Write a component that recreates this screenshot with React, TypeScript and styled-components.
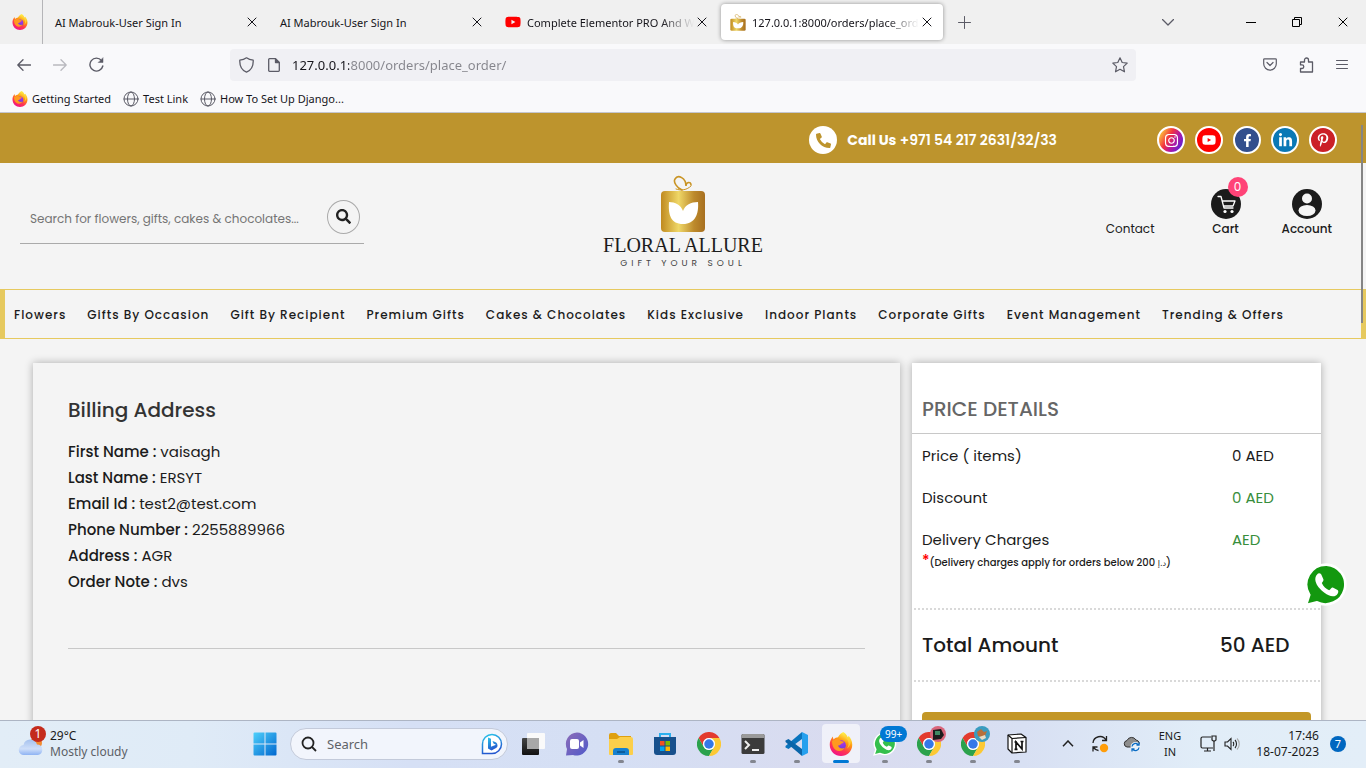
import React from 'react';
import styled, { createGlobalStyle } from 'styled-components';
import { FaInstagram, FaYoutube, FaFacebookF, FaLinkedinIn, FaPinterestP, FaPhoneAlt, FaSearch } from 'react-icons/fa';

const siteFont = 'Poppins, Inter, sans-serif';
const systemFont = '"Segoe UI", "Noto Sans", "Open Sans", sans-serif';

const GlobalStyle = createGlobalStyle`
  *, *::before, *::after { box-sizing: border-box; }
  body { margin: 0; font-family: ${siteFont}; color: #1b1b1b; background: #f4f4f4; }
  button { border: 0; padding: 0; background: none; font: inherit; color: inherit; }
  a { color: inherit; text-decoration: none; }
  svg { display: block; flex: none; }
`;

const Screen = styled.div`
  height: 100vh;
  display: flex;
  flex-direction: column;
  overflow: hidden;
`;

/* ---------- Browser chrome ---------- */

const Browser = styled.header`
  flex: none;
  font-family: ${systemFont};
  font-size: 11px;
  color: #15141a;
  background: #f9f9fb;
  border-bottom: 1px solid #c4c6ce;
`;

const TabStrip = styled.div`
  display: flex;
  align-items: center;
  height: 44px;
  background: #f0f0f0;
`;

const PinnedTab = styled.button`
  width: 43px;
  height: 44px;
  padding-left: 12px;
  border-right: 1px solid #b5b5b8;
  margin-right: 3px;
`;

const Tab = styled.div<{ $active?: boolean }>`
  display: flex;
  align-items: center;
  width: 222px;
  height: 36px;
  margin-right: 3px;
  padding: 0 8px 0 9px;
  border-radius: 4px;
  background: ${p => (p.$active ? '#fff' : 'transparent')};
  box-shadow: ${p => (p.$active ? '0 0 4px rgba(0, 0, 0, 0.4)' : 'none')};
`;

const TabTitle = styled.span<{ $fade?: boolean }>`
  flex: 1;
  min-width: 0;
  white-space: nowrap;
  mask-image: ${p => (p.$fade ? 'linear-gradient(90deg, #000 80%, transparent)' : 'none')};
  svg + & { margin-left: 6px; }
`;

const IconButton = styled.button<{ $w?: number }>`
  display: flex;
  align-items: center;
  justify-content: center;
  width: ${p => p.$w ?? 16}px;
  height: 32px;
  color: #5b5b66;
`;

const Spacer = styled.div`
  flex: 1;
`;

const WindowControls = styled.div`
  display: flex;
  margin-left: 37px;
`;

const Toolbar = styled.div`
  display: flex;
  align-items: center;
  height: 41px;
  padding: 0 6px;
`;

const UrlBar = styled.div`
  display: flex;
  align-items: center;
  flex: 1;
  height: 32px;
  margin: 0 116px;
  padding: 0 2px;
  border-radius: 4px;
  background: #f0f0f4;
`;

const UrlInput = styled.input`
  flex: 1;
  min-width: 0;
  height: 28px;
  margin-left: 4px;
  padding: 0;
  border: 0;
  outline: 0;
  font-family: ${systemFont};
  font-size: 13px;
  color: transparent;
  background: linear-gradient(90deg, #15141a 57px, #85858c 57px);
  background-clip: text;
`;

const Bookmarks = styled.nav`
  display: flex;
  gap: 12px;
  height: 27px;
  padding: 0 12px;
`;

const Bookmark = styled.a`
  display: flex;
  align-items: center;
  gap: 4px;
`;

/* ---------- Shop page ---------- */

const Viewport = styled.div`
  position: relative;
  flex: 1;
  min-height: 0;
  overflow: hidden;
  background: #f4f4f4;
`;

const ScrollThumb = styled.div`
  position: absolute;
  top: 12px;
  right: 3px;
  width: 2px;
  height: 198px;
  background: #858585;
`;

const TopBar = styled.div`
  display: flex;
  align-items: center;
  justify-content: flex-end;
  gap: 100px;
  height: 50px;
  padding: 4px 29px 0 0;
  background: #bd942d;
`;

const CallLink = styled.a`
  display: flex;
  align-items: center;
  gap: 10px;
  font-size: 14px;
  font-weight: 600;
  color: #fff;
  strong { font-weight: 700; }
`;

const Round = styled.span`
  display: grid;
  place-items: center;
  width: 28px;
  height: 28px;
  border-radius: 50%;
  color: #bd942d;
  background: #fff;
`;

const Socials = styled.div`
  display: flex;
  gap: 10px;
`;

const SocialLink = styled.a<{ $bg: string }>`
  display: grid;
  place-items: center;
  width: 28px;
  height: 28px;
  border: 2px solid #fff;
  border-radius: 50%;
  color: #fff;
  background: ${p => p.$bg};
`;

const ShopHeader = styled.div`
  display: grid;
  grid-template-columns: 1fr auto 1fr;
  height: 126px;
  padding: 0 34px 0 20px;
`;

const SearchForm = styled.form`
  display: flex;
  align-items: center;
  align-self: start;
  width: 344px;
  height: 54px;
  margin-top: 27px;
  padding: 0 4px 0 10px;
  border-bottom: 1px solid #aaa;
`;

const SearchInput = styled.input`
  flex: 1;
  min-width: 0;
  padding: 4px 0 0;
  border: 0;
  outline: 0;
  background: none;
  font-family: ${siteFont};
  font-size: 12px;
  &::placeholder { color: #757575; }
`;

const SearchButton = styled.button`
  display: grid;
  place-items: center;
  width: 33px;
  height: 34px;
  border: 1px solid #aaa;
  border-radius: 50%;
  color: #222;
`;

const Logo = styled.a`
  display: flex;
  flex-direction: column;
  align-items: center;
  margin-left: 14px;
  padding-top: 12px;
  color: #1d1d1d;
`;

const LogoName = styled.span`
  font-family: "Liberation Serif", serif;
  font-size: 20px;
  line-height: 24px;
  white-space: nowrap;
`;

const LogoTag = styled.span`
  font-size: 9px;
  line-height: 12px;
  letter-spacing: 4px;
  color: #444;
`;

const Actions = styled.nav`
  display: flex;
  justify-content: flex-end;
  gap: 41px;
  padding-top: 27px;
  font-size: 12px;
  font-weight: 500;
  line-height: 18px;
`;

const Action = styled.a`
  position: relative;
  display: flex;
  flex-direction: column;
  align-items: center;
  justify-content: flex-end;
  gap: 1px;
  height: 48px;
`;

const ContactLink = styled(Action)`
  margin-right: 15px;
  font-weight: 400;
`;

const CartBadge = styled.span`
  position: absolute;
  top: -13px;
  right: -7px;
  width: 20px;
  height: 20px;
  border-radius: 50%;
  font-size: 12px;
  font-weight: 400;
  line-height: 20px;
  text-align: center;
  color: #fff;
  background: #ff4377;
`;

const CategoryNav = styled.nav`
  display: flex;
  align-items: center;
  gap: 21px;
  height: 50px;
  padding: 2px 9px 0;
  border: solid #e6c95f;
  border-width: 1px 5px;
  font-size: 12px;
  font-weight: 500;
  letter-spacing: 1px;
  white-space: nowrap;
`;

const Columns = styled.main`
  display: grid;
  grid-template-columns: 867fr 409fr;
  gap: 12px;
  padding: 24px 45px 0 33px;
`;

const Card = styled.section`
  min-height: 460px;
  box-shadow: 0 0 8px rgba(0, 0, 0, 0.3);
`;

const BillingCard = styled(Card)`
  padding: 32px 35px 0;
  background: #f4f4f4;
`;

const BillingTitle = styled.h2`
  margin: 0 0 14px;
  font-size: 20px;
  font-weight: 500;
  line-height: 30px;
  color: #333;
`;

const BillingList = styled.dl`
  margin: 0;
  padding-bottom: 53px;
  border-bottom: 1px solid #c8c8c8;
  font-size: 15px;
  line-height: 26px;
`;

const BillingRow = styled.div`
  display: flex;
  gap: 4px;
  dt { font-weight: 500; }
  dd { margin: 0; }
`;

const PriceCard = styled(Card)`
  background: #fff;
`;

const PriceTitle = styled.h2`
  margin: 0;
  padding: 34px 10px 12px;
  border-bottom: 1px solid #c8c8c8;
  font-size: 20px;
  font-weight: 500;
  line-height: 24px;
  color: #666;
`;

const PriceList = styled.dl`
  display: grid;
  gap: 18px;
  margin: 0;
  padding: 10px 10px 0;
  font-size: 15px;
  line-height: 24px;
`;

const PriceRow = styled.div<{ $green?: boolean }>`
  display: grid;
  grid-template-columns: 1fr 79px;
  dd { margin: 0; color: ${p => (p.$green ? '#388e3c' : 'inherit')}; }
`;

const Note = styled.p`
  margin: 0 10px 35px;
  padding-top: 1px;
  font-size: 10px;
  font-weight: 500;
  line-height: 18px;
`;

const Star = styled.span`
  font-size: 15px;
  line-height: 1;
  color: #f00;
`;

const Currency = styled.span`
  font-family: "DejaVu Sans", sans-serif;
  font-size: 8px;
  font-weight: 400;
`;

const Total = styled.div`
  display: grid;
  grid-template-columns: 1fr 91px;
  margin: 0 1px 30px 2px;
  padding: 0 9px 0 8px;
  border: dotted #d9d9d9;
  border-width: 2px 0;
  font-size: 20px;
  font-weight: 500;
  line-height: 70px;
`;

const OrderButton = styled.button`
  display: block;
  width: calc(100% - 20px);
  height: 44px;
  margin: 0 10px;
  border-radius: 4px;
  background: #c39727;
`;

const ChatLink = styled.a`
  position: absolute;
  right: 18px;
  bottom: 113px;
`;

/* ---------- Taskbar ---------- */

const Taskbar = styled.footer`
  display: flex;
  align-items: center;
  flex: none;
  height: 48px;
  padding-bottom: 2px;
  border-top: 1px solid #adb5c4;
  font-family: ${systemFont};
  font-size: 12px;
  line-height: 16px;
  background: linear-gradient(90deg, #e2edf7 0%, #dfebf7 14%, #d6e0f5 30%, #d5dff4 45%, #d9dbef 62%, #d8e0f3 75%, #e1edf8 88%, #e3eef8 100%);
`;

const Weather = styled.button`
  position: relative;
  display: flex;
  align-items: center;
  gap: 6px;
  width: 243px;
  padding-left: 18px;
  text-align: left;
`;

const Muted = styled.div`
  color: #5c6066;
`;

const AlertBadge = styled.span`
  position: absolute;
  top: -2px;
  left: 30px;
  width: 16px;
  height: 16px;
  border-radius: 50%;
  text-align: center;
  color: #fff;
  background: #c42b1c;
`;

const TaskButton = styled.button<{ $state?: 'active' | 'running' }>`
  position: relative;
  display: grid;
  place-items: center;
  width: 38px;
  height: 39px;
  margin: 0 3px;
  border-radius: 4px;
  background: ${p => (p.$state === 'active' ? 'rgba(255, 255, 255, 0.6)' : 'transparent')};
  &::after {
    content: '';
    position: absolute;
    display: ${p => (p.$state ? 'block' : 'none')};
    bottom: 0;
    width: ${p => (p.$state === 'active' ? 16 : 6)}px;
    height: 3px;
    border-radius: 2px;
    background: ${p => (p.$state === 'active' ? '#0078d4' : '#83868f')};
  }
`;

const UnreadBadge = styled.span`
  position: absolute;
  top: 2px;
  left: 14px;
  padding: 0 5px;
  border-radius: 8px;
  font-size: 10px;
  line-height: 16px;
  color: #fff;
  background: #0078d4;
`;

const Avatar = styled.svg`
  position: absolute;
  top: 2px;
  right: 2px;
`;

const TaskSearch = styled.label`
  display: flex;
  align-items: center;
  gap: 10px;
  width: 218px;
  height: 32px;
  margin: 0 3px;
  padding: 0 4px 0 10px;
  border: 1px solid #c3cada;
  border-radius: 16px;
  background: #f2f5fc;
  input {
    flex: 1;
    min-width: 0;
    padding: 0;
    border: 0;
    outline: 0;
    background: none;
    font-family: ${systemFont};
    font-size: 13px;
  }
  input::placeholder { color: #5f6368; }
`;

const Tray = styled.div`
  display: flex;
  align-items: center;
  padding-right: 20px;
  text-align: center;
`;

const Language = styled.button`
  width: 44px;
  font-size: 11px;
`;

const Clock = styled.time`
  width: 79px;
  margin-right: 11px;
  text-align: right;
`;

const NoticeBadge = styled.span`
  width: 16px;
  height: 16px;
  border-radius: 50%;
  font-size: 11px;
  color: #fff;
  background: #0067c0;
`;

/* ---------- Drawings ---------- */

const stroke = { fill: 'none', stroke: 'currentColor', strokeLinecap: 'round', strokeLinejoin: 'round' } as const;

const FirefoxIcon = ({ size, id }: { size: number; id: string }) => (
  <svg width={size} height={size} viewBox="0 0 32 32">
    <defs>
      <linearGradient id={`${id}a`} x1="0.8" y1="0" x2="0.3" y2="1">
        <stop offset="0.1" stopColor="#fff44f" />
        <stop offset="0.4" stopColor="#ff980e" />
        <stop offset="0.7" stopColor="#ff3750" />
        <stop offset="1" stopColor="#f0108a" />
      </linearGradient>
      <radialGradient id={`${id}b`} cx="0.6" cy="0.2" r="0.9">
        <stop offset="0" stopColor="#b833e1" />
        <stop offset="1" stopColor="#5b3fe0" />
      </radialGradient>
    </defs>
    <path fill={`url(#${id}a)`} d="M19 0c4 2 5 5 6 8l1-3c3 3 5 7 5 12 0 9-7 15-15 15S1 26 1 17c0-4 1-7 4-11l1 4c2-2 4-3 6-3 2-4 5-6 7-7z" />
    <circle cx="16" cy="17.500" r="6.500" fill={`url(#${id}b)`} />
    <path fill="#ff9a1f" d="M4 12c4-3 9-3 12 0l4 1c-1 2-3 2-4 3-1 2-3 2-4 2 1 4 6 5 9 3-2 4-8 6-12 3-4-3-5-7-5-12z" />
    <path fill="#ffd43a" opacity=".8" d="M19 1c3 3 3 7 6 10 2 4 1 8-1 11 5-3 6-10 3-14-2-1-3-2-4-4-1-1-2-2-4-3z" />
  </svg>
);

const GlobeIcon = () => (
  <svg width="16" height="16" viewBox="0 0 16 16" {...stroke} stroke="#5b5b66">
    <circle cx="8" cy="8" r="7" />
    <ellipse cx="8" cy="8" rx="3.5" ry="7" />
    <path d="M1 8h14" />
  </svg>
);

const CloseIcon = ({ color = '#15141a' }: { color?: string }) => (
  <svg width="10" height="10" viewBox="0 0 10 10" {...stroke} stroke={color}>
    <path d="M1 1l8 8M9 1L1 9" />
  </svg>
);

const GiftMark = ({ width, height, id }: { width: number; height: number; id: string }) => (
  <svg width={width} height={height} viewBox="0 0 46 58" preserveAspectRatio="none">
    <defs>
      <linearGradient id={id}>
        <stop offset="0" stopColor="#c08a1f" />
        <stop offset="0.4" stopColor="#efd767" />
        <stop offset="0.75" stopColor="#bd8a2c" />
        <stop offset="1" stopColor="#a76f20" />
      </linearGradient>
    </defs>
    <rect x="1" y="16" width="44" height="41" rx="4" fill={`url(#${id})`} />
    <path fill="#fff" d="M9 27c6 0 12 3 14 9 2-6 8-9 15-9 1 12-3 22-15 22S8 40 9 27z" />
    <g fill="none" stroke="#c99424" strokeWidth="1.600" strokeLinecap="round">
      <path d="M22 15c-5-2-9-8-7-11 3-5 11-1 11 7 0-4 5-5 5-1" />
      <path d="M16 14c5 2 11 1 15-3" strokeWidth="1" />
    </g>
  </svg>
);

const ChromeIcon = () => (
  <svg width="24" height="24" viewBox="0 0 48 48">
    <path fill="#e33b2e" d="M24 12h20.800A24 24 0 0 0 3.200 12L13.600 30A12 12 0 0 1 24 12z" />
    <path fill="#2ba24c" d="M13.600 30L3.200 12A24 24 0 0 0 24 48l10.400-18A12 12 0 0 1 13.600 30z" />
    <path fill="#fcc934" d="M34.400 30L24 48A24 24 0 0 0 44.800 12H24a12 12 0 0 1 10.400 18z" />
    <circle cx="24" cy="24" r="12" fill="#fff" />
    <circle cx="24" cy="24" r="9.500" fill="#3478e8" />
  </svg>
);

const CartIcon = () => (
  <svg width="30" height="30" viewBox="0 0 30 30">
    <circle cx="15" cy="15" r="15" fill="#1b1b1b" />
    <g fill="none" stroke="#fff" strokeWidth="1.300" strokeLinecap="round" strokeLinejoin="round">
      <path d="M7 7.500h3l3 11.500h9M11 12h13l-2 5H12.500" />
    </g>
    <circle cx="14" cy="22.500" r="1.600" fill="#fff" />
    <circle cx="21" cy="22.500" r="1.600" fill="#fff" />
  </svg>
);

const AccountIcon = () => (
  <svg width="30" height="30" viewBox="0 0 30 30">
    <circle cx="15" cy="15" r="15" fill="#1b1b1b" />
    <circle cx="15" cy="9.500" r="5" fill="#f4f4f4" />
    <ellipse cx="15" cy="21.500" rx="8.500" ry="5.500" fill="#f4f4f4" />
  </svg>
);

const WhatsAppBubble = ({ size, green }: { size: number; green: string }) => (
  <svg width={size} height={size} viewBox="0 0 42 42">
    <path fill={green} stroke="#fff" strokeWidth="2.500" d="M21.500 1.500A19 19 0 1 1 12 37.500L2 40l3-9.500A19 19 0 0 1 21.500 1.500z" />
    <path fill="#fff" d="M12.500 11c1-1.500 3-1.500 4 0l2 4.500c.5 1-.5 2.500-1.500 3.500 1.500 3.500 4 5.500 7 7 1.500-1 2.500-3 3.500-2.500l4.500 2.200c1.500 1 .5 4-1.500 5.300-3 1.800-7 .5-11-2.500-4-3-7.500-7-8.500-11-.6-2.500 0-5 1.500-6.500z" />
  </svg>
);

const WeatherIcon = () => (
  <svg width="26" height="26" viewBox="0 0 26 26">
    <defs>
      <linearGradient id="cloud" x2="0" y2="1">
        <stop offset="0" stopColor="#a6c2ee" />
        <stop offset="0.6" stopColor="#cfdff9" />
        <stop offset="1" stopColor="#8eb3f3" />
      </linearGradient>
    </defs>
    <circle cx="18" cy="12" r="6" fill="#f28b30" />
    <path fill="url(#cloud)" d="M6 24a5 5 0 0 1-.5-10A7 7 0 0 1 19 13.500 5.300 5.300 0 0 1 20 24z" />
  </svg>
);

const WindowsIcon = () => (
  <svg width="24" height="24" viewBox="0 0 24 24">
    <defs>
      <linearGradient id="win" x2="1" y2="1"><stop stopColor="#4fd0fb" /><stop offset="1" stopColor="#0067cf" /></linearGradient>
    </defs>
    <path fill="url(#win)" d="M1.500.500h10v11H.5v-10a1 1 0 0 1 1-1zM12.500.500h10a1 1 0 0 1 1 1v10h-11zM.500 12.500h11v11h-10a1 1 0 0 1-1-1zM12.500 12.500h11v10a1 1 0 0 1-1 1h-10z" />
  </svg>
);

const BingIcon = () => (
  <svg width="22" height="22" viewBox="0 0 22 22">
    <defs>
      <linearGradient id="bing" x2="0.3" y2="1"><stop stopColor="#29c7ea" /><stop offset="1" stopColor="#2457cf" /></linearGradient>
    </defs>
    <path fill="#fff" stroke="url(#bing)" strokeWidth="1.500" d="M11 1.500a9.500 9.500 0 1 1 0 19H1.500V11A9.500 9.500 0 0 1 11 1.500z" />
    <path fill="url(#bing)" d="M7 4.500l3 1.200v8l5-2-2.500-1.200-1-2.500c3 .8 5 2 5 4.500s-2 2.500-6 5L7 15.500z" />
  </svg>
);

const TaskViewIcon = () => (
  <svg width="24" height="24" viewBox="0 0 24 24">
    <defs><linearGradient id="dk" x2="0" y2="1"><stop stopColor="#444" /><stop offset="1" stopColor="#111" /></linearGradient></defs>
    <rect x="1" y="6" width="17" height="17" rx="1" fill="url(#dk)" />
    <rect x="6" y="1" width="18" height="16" rx="1" fill="#fafafa" />
    <rect x="6" y="6" width="12" height="11" fill="#a8a8a8" />
  </svg>
);

const ChatIcon = () => (
  <svg width="24" height="24" viewBox="0 0 24 24">
    <defs><linearGradient id="chat" x2="1" y2="1"><stop stopColor="#8d6db8" /><stop offset="1" stopColor="#5059c9" /></linearGradient></defs>
    <path fill="url(#chat)" d="M12 .500a11.500 11.500 0 1 1-4 22.400L1 23.500l1-6.500A11.500 11.500 0 0 1 12 .500z" />
    <rect x="5" y="7" width="9" height="10" rx="2" fill="#fff" />
    <path fill="#fff" d="M15 10.500l3.500-2.500v8L15 13.500z" />
  </svg>
);

const FolderIcon = () => (
  <svg width="26" height="24" viewBox="0 0 26 24">
    <path fill="#dfa010" d="M1 3a2 2 0 0 1 2-2h5l3 3h12v6H1z" />
    <path fill="#fccf4b" d="M1 7h8l3-2h11a2 2 0 0 1 2 2v15a1 1 0 0 1-1 1H2a1 1 0 0 1-1-1z" />
    <path fill="#1680cf" d="M5 23v-4a3 3 0 0 1 3-3h10a3 3 0 0 1 3 3v4z" />
    <path fill="#0b5c9d" d="M9 19h8v2H9z" />
  </svg>
);

const StoreIcon = () => (
  <svg width="24" height="24" viewBox="0 0 24 24">
    <path fill="none" stroke="#2bb0ee" strokeWidth="2" d="M7 6V2h10v4" />
    <path fill="#17508c" d="M1 5h22v15a3 3 0 0 1-3 3H4a3 3 0 0 1-3-3z" />
    <path fill="#f25022" d="M7 9h4.500v4.500H7z" /><path fill="#7fba00" d="M12.500 9H17v4.500h-4.500z" />
    <path fill="#00a4ef" d="M7 14.500h4.500V19H7z" /><path fill="#ffb900" d="M12.500 14.500H17V19h-4.500z" />
  </svg>
);

const TerminalIcon = () => (
  <svg width="24" height="22" viewBox="0 0 24 22">
    <rect x=".5" y="1" width="23" height="20" rx="1.500" fill="#3b3b3b" />
    <path fill="#9a9a9a" d="M.500 2.500a1.500 1.500 0 0 1 1.500-1.500h20a1.500 1.500 0 0 1 1.500 1.500V5H.5z" />
    <path fill="none" stroke="#eee" strokeWidth="2" d="M4 8l4 4-4 4M11 17h7" />
  </svg>
);

const CodeIcon = () => (
  <svg width="24" height="24" viewBox="0 0 24 24">
    <path fill="#0a74bd" d="M17 0L17 7 3.500 17 .500 15.500v-1.500z" />
    <path fill="#0a65a9" d="M.500 8.500L3.500 7 17 17v7L.500 10z" />
    <path fill="#26a0ee" d="M17 0l6 3v18l-6 3z" />
  </svg>
);

const NotionIcon = () => (
  <svg width="20" height="21" viewBox="0 0 20 21">
    <path fill="#fff" stroke="#111" strokeWidth="1.200" strokeLinejoin="round" d="M1 2l13-1 5 3.500V19L5 20l-4-4z" />
    <path fill="none" stroke="#111" strokeWidth="1.200" d="M1 2l4 3.500V20M5 5.500l14-1" />
    <path fill="none" stroke="#111" strokeWidth="1.700" d="M9 16.500V9l6 7V8.500M7.500 9H10M13.500 8.500h3M7.500 16.300h3" />
  </svg>
);

const ProfileAvatar = ({ bg, children }: { bg: string; children: React.ReactNode }) => (
  <Avatar width="16" height="16" viewBox="0 0 16 16">
    <circle cx="8" cy="8" r="8" fill={bg} />
    {children}
  </Avatar>
);

/* ---------- Content ---------- */

const categories = [
  'Flowers', 'Gifts By Occasion', 'Gift By Recipient', 'Premium Gifts', 'Cakes & Chocolates',
  'Kids Exclusive', 'Indoor Plants', 'Corporate Gifts', 'Event Management', 'Trending & Offers',
];

const billing: [string, string][] = [
  ['First Name', 'vaisagh'],
  ['Last Name', 'ERSYT'],
  ['Email Id', 'test2@test.com'],
  ['Phone Number', '2255889966'],
  ['Address', 'AGR'],
  ['Order Note', 'dvs'],
];

const socials = [
  { name: 'Instagram', bg: 'linear-gradient(120deg, #fdd13a 8%, #f3333f 40%, #b4189f 62%, #5a22d8 90%)', icon: <FaInstagram size={15} /> },
  { name: 'YouTube', bg: '#f00', icon: <FaYoutube size={14} /> },
  { name: 'Facebook', bg: '#334f8d', icon: <FaFacebookF size={13} /> },
  { name: 'LinkedIn', bg: '#0a78b5', icon: <FaLinkedinIn size={15} /> },
  { name: 'Pinterest', bg: '#cb2027', icon: <FaPinterestP size={14} /> },
];

const CloseTab = () => (
  <IconButton aria-label="Close tab"><CloseIcon /></IconButton>
);

const BrowserChrome = () => (
  <Browser>
    <TabStrip>
      <PinnedTab aria-label="Firefox"><FirefoxIcon size={16} id="pin" /></PinnedTab>
      <Tab><TabTitle>AI Mabrouk-User Sign In</TabTitle><CloseTab /></Tab>
      <Tab><TabTitle>AI Mabrouk-User Sign In</TabTitle><CloseTab /></Tab>
      <Tab>
        <FaYoutube size={16} color="#f00" />
        <TabTitle $fade>Complete Elementor PRO And W</TabTitle>
        <CloseTab />
      </Tab>
      <Tab $active>
        <GiftMark width={16} height={17} id="tabGold" />
        <TabTitle $fade>127.0.0.1:8000/orders/place_ord</TabTitle>
        <CloseTab />
      </Tab>
      <IconButton $w={36} aria-label="New tab">
        <svg width="13" height="13" viewBox="0 0 13 13" {...stroke}><path d="M6.500.500v12M.500 6.500h12" /></svg>
      </IconButton>
      <Spacer />
      <IconButton $w={46} aria-label="List all tabs">
        <svg width="12" height="7" viewBox="0 0 12 7" {...stroke} strokeWidth="1.300"><path d="M.500.500L6 6 11.500.500" /></svg>
      </IconButton>
      <WindowControls>
        <IconButton $w={46} aria-label="Minimize">
          <svg width="10" height="1" viewBox="0 0 10 1"><path d="M0 0h10v1H0z" fill="#000" /></svg>
        </IconButton>
        <IconButton $w={46} aria-label="Restore">
          <svg width="10" height="10" viewBox="0 0 10 10" fill="none" stroke="#000"><path d="M.500 2.500h7v7h-7zM2.500 2.500v-2h7v7h-2" /></svg>
        </IconButton>
        <IconButton $w={46} aria-label="Close window"><CloseIcon color="#000" /></IconButton>
      </WindowControls>
    </TabStrip>
    <Toolbar>
      <IconButton $w={36} aria-label="Back">
        <svg width="14" height="12" viewBox="0 0 14 12" {...stroke} strokeWidth="1.300"><path d="M13.500 6H.8M6 .8L.8 6 6 11.200" /></svg>
      </IconButton>
      <IconButton $w={36} aria-label="Forward" disabled>
        <svg width="14" height="12" viewBox="0 0 14 12" {...stroke} strokeWidth="1.300" stroke="#b9b9bf"><path d="M.500 6h12.700M8 .8L13.200 6 8 11.200" /></svg>
      </IconButton>
      <IconButton $w={36} aria-label="Reload">
        <svg width="15" height="15" viewBox="0 0 15 15" {...stroke} strokeWidth="1.400"><path d="M13.800 9a6.500 6.500 0 1 1-1.300-5.500" /><path d="M14 1v4.500H9.500z" fill="currentColor" strokeWidth=".5" /></svg>
      </IconButton>
      <UrlBar>
        <IconButton $w={28} aria-label="Tracking protection">
          <svg width="15" height="16" viewBox="0 0 15 16" {...stroke} strokeWidth="1.300"><path d="M7.500.800C5.500 2.300 3 3 .8 3.200c-.3 6 1.700 10 6.700 12 5-2 7-6 6.700-12C12 3 9.500 2.300 7.500.800z" /></svg>
        </IconButton>
        <IconButton $w={28} aria-label="Site information">
          <svg width="12" height="14" viewBox="0 0 12 14" {...stroke} strokeWidth="1.300"><path d="M1.500.700H7.500l3.800 3.800v8a.8.8 0 0 1-.8.8h-9a.8.8 0 0 1-.8-.8v-11a.8.8 0 0 1 .8-.8z" /><path d="M7.500 1v3.500h3.500z" fill="currentColor" /></svg>
        </IconButton>
        <UrlInput aria-label="Address" defaultValue="127.0.0.1:8000/orders/place_order/" />
        <IconButton $w={28} aria-label="Bookmark this page">
          <svg width="16" height="16" viewBox="0 0 16 16" {...stroke} strokeWidth="1.200"><path d="M8 .800l2.200 4.700 5 .6-3.700 3.500 1 5.200L8 12.300l-4.500 2.500 1-5.200L.8 6.100l5-.6z" /></svg>
        </IconButton>
      </UrlBar>
      <IconButton $w={36} aria-label="Pocket">
        <svg width="14" height="13" viewBox="0 0 14 13" {...stroke} strokeWidth="1.200"><path d="M1.500.800h11a.8.8 0 0 1 .8.8v4.200a6.300 6.300 0 0 1-12.600 0V1.600a.8.8 0 0 1 .8-.8zM4 4.500l3 3 3-3" /></svg>
      </IconButton>
      <IconButton $w={36} aria-label="Extensions">
        <svg width="15" height="16" viewBox="0 0 15 16" {...stroke} strokeWidth="1.300"><path d="M1.500 5h4V3a2 2 0 0 1 4 0v2h4v10h-12v-3.500H3a1.800 1.800 0 0 0 0-3.600H1.500z" /></svg>
      </IconButton>
      <IconButton $w={36} aria-label="Menu">
        <svg width="12" height="11" viewBox="0 0 12 11" {...stroke}><path d="M.500 1.500h11M.500 5.500h11M.500 9.500h11" /></svg>
      </IconButton>
    </Toolbar>
    <Bookmarks aria-label="Bookmarks">
      <Bookmark href="#"><FirefoxIcon size={16} id="bm" />Getting Started</Bookmark>
      <Bookmark href="#"><GlobeIcon />Test Link</Bookmark>
      <Bookmark href="#"><GlobeIcon />How To Set Up Django...</Bookmark>
    </Bookmarks>
  </Browser>
);

const ShopPage = () => (
  <Viewport>
    <TopBar>
      <CallLink href="tel:+971542172631">
        <Round><FaPhoneAlt size={15} /></Round>
        <span><strong>Call Us</strong> +971 54 217 2631/32/33</span>
      </CallLink>
      <Socials>
        {socials.map(s => <SocialLink key={s.name} href="#" aria-label={s.name} $bg={s.bg}>{s.icon}</SocialLink>)}
      </Socials>
    </TopBar>
    <ShopHeader>
      <SearchForm onSubmit={e => e.preventDefault()}>
        <SearchInput type="search" aria-label="Search the shop" placeholder="Search for flowers, gifts, cakes & chocolates..." />
        <SearchButton aria-label="Search"><FaSearch size={15} /></SearchButton>
      </SearchForm>
      <Logo href="#">
        <GiftMark width={46} height={58} id="logoGold" />
        <LogoName>FLORAL ALLURE</LogoName>
        <LogoTag>GIFT YOUR SOUL</LogoTag>
      </Logo>
      <Actions aria-label="Account">
        <ContactLink href="#">Contact</ContactLink>
        <Action href="#"><CartIcon /><CartBadge>0</CartBadge>Cart</Action>
        <Action href="#"><AccountIcon />Account</Action>
      </Actions>
    </ShopHeader>
    <CategoryNav aria-label="Categories">
      {categories.map(c => <a key={c} href="#">{c}</a>)}
    </CategoryNav>
    <Columns>
      <BillingCard>
        <BillingTitle>Billing Address</BillingTitle>
        <BillingList>
          {billing.map(([label, value]) => (
            <BillingRow key={label}><dt>{label} :</dt><dd>{value}</dd></BillingRow>
          ))}
        </BillingList>
      </BillingCard>
      <PriceCard>
        <PriceTitle>PRICE DETAILS</PriceTitle>
        <PriceList>
          <PriceRow><dt>Price ( items)</dt><dd>0 AED</dd></PriceRow>
          <PriceRow $green><dt>Discount</dt><dd>0 AED</dd></PriceRow>
          <PriceRow $green><dt>Delivery Charges</dt><dd>AED</dd></PriceRow>
        </PriceList>
        <Note><Star>*</Star>(Delivery charges apply for orders below 200 <Currency>د.إ</Currency>)</Note>
        <Total><span>Total Amount</span><span>50 AED</span></Total>
        <OrderButton aria-label="Place order" />
      </PriceCard>
    </Columns>
    <ChatLink href="#" aria-label="WhatsApp"><WhatsAppBubble size={44} green="#13980f" /></ChatLink>
    <ScrollThumb />
  </Viewport>
);

const SystemTaskbar = () => (
  <Taskbar>
    <Weather>
      <WeatherIcon />
      <AlertBadge>1</AlertBadge>
      <div>29°C<Muted>Mostly cloudy</Muted></div>
    </Weather>
    <TaskButton aria-label="Start"><WindowsIcon /></TaskButton>
    <TaskSearch>
      <svg width="16" height="16" viewBox="0 0 16 16" fill="none" stroke="#222" strokeWidth="1.800"><circle cx="7" cy="7" r="5.500" /><path d="M11 11l4 4" /></svg>
      <input placeholder="Search" aria-label="Search Windows" />
      <BingIcon />
    </TaskSearch>
    <TaskButton aria-label="Task view"><TaskViewIcon /></TaskButton>
    <TaskButton aria-label="Chat"><ChatIcon /></TaskButton>
    <TaskButton aria-label="File Explorer" $state="running"><FolderIcon /></TaskButton>
    <TaskButton aria-label="Microsoft Store"><StoreIcon /></TaskButton>
    <TaskButton aria-label="Chrome"><ChromeIcon /></TaskButton>
    <TaskButton aria-label="Terminal" $state="running"><TerminalIcon /></TaskButton>
    <TaskButton aria-label="Code" $state="running"><CodeIcon /></TaskButton>
    <TaskButton aria-label="Firefox" $state="active"><FirefoxIcon size={24} id="task" /></TaskButton>
    <TaskButton aria-label="WhatsApp" $state="running"><WhatsAppBubble size={24} green="#35bf4d" /><UnreadBadge>99+</UnreadBadge></TaskButton>
    <TaskButton aria-label="Chrome, work profile" $state="running">
      <ChromeIcon />
      <ProfileAvatar bg="#d9657a"><path fill="#1c1c1c" d="M3 4l8-1 3 6-3 4-8 1z" /><path fill="#3f8a63" d="M5 5h5v4H5z" /></ProfileAvatar>
    </TaskButton>
    <TaskButton aria-label="Chrome, home profile" $state="running">
      <ChromeIcon />
      <ProfileAvatar bg="#3a9cc0"><path fill="#b6703c" d="M3 6l4-3 3 3 3-1-2 5-4 1-3-1z" /><path fill="#e9dcc6" d="M5 11l6-2 1 3-4 2z" /></ProfileAvatar>
    </TaskButton>
    <TaskButton aria-label="Notion" $state="running"><NotionIcon /></TaskButton>
    <Spacer />
    <Tray>
      <IconButton $w={32} aria-label="Hidden icons">
        <svg width="12" height="7" viewBox="0 0 12 7" fill="none" stroke="#222" strokeWidth="1.500"><path d="M1 6.200L6 1l5 5.200" /></svg>
      </IconButton>
      <IconButton $w={32} aria-label="Updates">
        <svg width="18" height="18" viewBox="0 0 18 18" fill="none" stroke="#222" strokeWidth="1.300"><path d="M2 8a7 7 0 0 1 13-3M15.500 1v4.500H11M2 16.500V12h4.500M2.500 12.500c1.500 2 3 3 5 3" /><circle cx="13" cy="13" r="4.200" fill="#ff9d0a" stroke="none" /></svg>
      </IconButton>
      <IconButton $w={32} aria-label="OneDrive">
        <svg width="18" height="16" viewBox="0 0 18 16"><path fill="#8d8d8d" stroke="#333" d="M4 11a3.300 3.300 0 0 1 0-6.500 5 5 0 0 1 9-.5 4 4 0 0 1 2 7z" /><circle cx="12.500" cy="11" r="5" fill="#e8f1fa" /><path fill="none" stroke="#0b6cc4" strokeWidth="1.300" d="M9 10.500a3.500 3.500 0 0 1 6-2M16 6.500v2.500h-2.500M16 11.500a3.500 3.500 0 0 1-6 2M9 15.500V13h2.500" /></svg>
      </IconButton>
      <Language>ENG<br />IN</Language>
      <IconButton $w={32} aria-label="Network">
        <svg width="17" height="17" viewBox="0 0 17 17" fill="none" stroke="#222" strokeWidth="1.200"><path d="M11 2H2.500A1.500 1.500 0 0 0 1 3.500v8A1.500 1.500 0 0 0 2.500 13H13M4 16h7M7.500 13v3M12 1h4v4l-2 1.500L12 5zM14 6.500V16" /></svg>
      </IconButton>
      <IconButton $w={16} aria-label="Volume">
        <svg width="16" height="14" viewBox="0 0 16 14" fill="none" stroke="#222" strokeWidth="1.100"><path d="M1 5h2.500L7 1.500v11L3.500 9H1zM9 5c1 1 1 3 0 4M11 3c2 2 2 6 0 8" /><path d="M13 1.500c3 3 3 8 0 11" stroke="#aaa" /></svg>
      </IconButton>
      <Clock>17:46<br />18-07-2023</Clock>
      <NoticeBadge>7</NoticeBadge>
    </Tray>
  </Taskbar>
);

export default function App() {
  return (
    <Screen>
      <GlobalStyle />
      <BrowserChrome />
      <ShopPage />
      <SystemTaskbar />
    </Screen>
  );
}
